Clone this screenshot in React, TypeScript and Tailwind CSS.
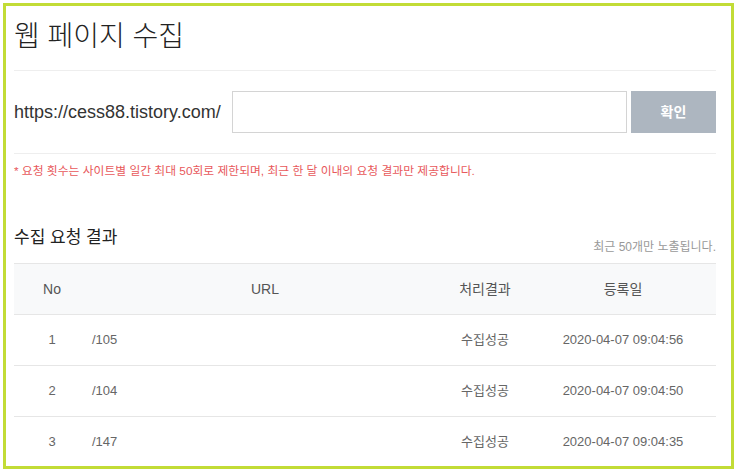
const rows = [
  { no: 1, url: '/105', status: '수집성공', date: '2020-04-07 09:04:56' },
  { no: 2, url: '/104', status: '수집성공', date: '2020-04-07 09:04:50' },
  { no: 3, url: '/147', status: '수집성공', date: '2020-04-07 09:04:35' },
]

const cols = 'grid grid-cols-[76px_350px_90px_186px] items-center'

export default function App() {
  return (
    <div className="h-[474px] w-[739px] bg-white p-[3px] font-['Liberation_Sans','Noto_Sans_CJK_KR',sans-serif]">
      <div className="h-[466px] w-[731px] overflow-hidden border-[3px] border-[#c2dc36] pl-[8px] pr-[15px]">
        <div className="flex h-[65px] items-center border-b border-[#eeeeee]">
          <h1 className="pb-[2px] text-[28px] font-light leading-none text-[#222]">웹 페이지 수집</h1>
        </div>

        <div className="flex items-center border-b border-[#eeeeee] py-[20px]">
          <span className="w-[218px] text-[18px] text-[#333]">https://cess88.tistory.com/</span>
          <input
            type="text"
            className="h-[42px] w-[395px] border border-[#d4d4d4] bg-white px-3 outline-none"
          />
          <button className="ml-[4px] h-[42px] w-[85px] bg-[#adb6c0] text-[14px] font-bold text-white">
            확인
          </button>
        </div>

        <p className="pt-[9px] text-[11.8px] leading-[16px] text-[#e8585b]">
          * 요청 횟수는 사이트별 일간 최대 50회로 제한되며, 최근 한 달 이내의 요청 결과만 제공합니다.
        </p>

        <div className="mt-[47px] flex items-end justify-between pb-[8px]">
          <h2 className="pb-[5px] text-[17px] leading-[24px] text-[#222]">수집 요청 결과</h2>
          <span className="text-[12px] leading-[16px] text-[#999]">최근 50개만 노출됩니다.</span>
        </div>

        <div className={`${cols} h-[52px] border-y border-[#e6e6e6] bg-[#f8f9fa] text-[14px] text-[#555]`}>
          <div className="text-center">No</div>
          <div className="text-center">URL</div>
          <div className="text-center">처리결과</div>
          <div className="text-center">등록일</div>
        </div>

        {rows.map((r) => (
          <div key={r.no} className={`${cols} h-[51px] border-b border-[#e6e6e6] text-[13px] text-[#666]`}>
            <div className="text-center">{r.no}</div>
            <div className="pl-[2px]">{r.url}</div>
            <div className="text-center">{r.status}</div>
            <div className="text-center">{r.date}</div>
          </div>
        ))}
      </div>
    </div>
  )
}
